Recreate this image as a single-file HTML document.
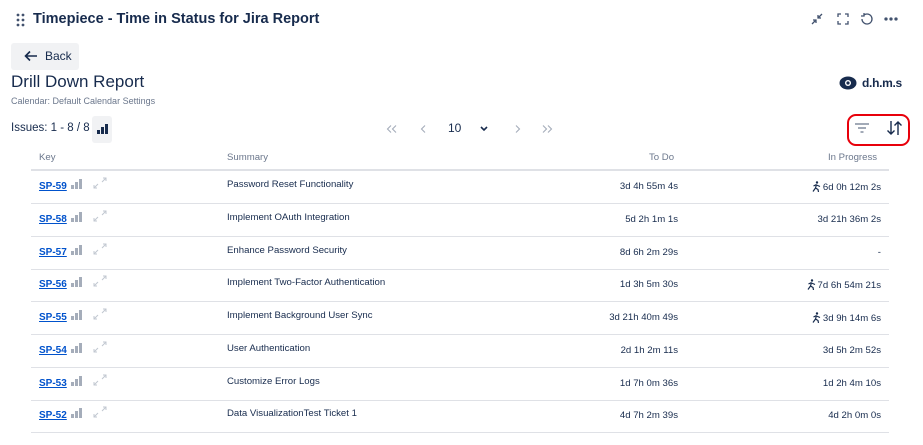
<!DOCTYPE html>
<html><head><style>
*{margin:0;padding:0;box-sizing:border-box}
body{width:923px;height:445px;background:#fff;font-family:"Liberation Sans",sans-serif;color:#172b4d;position:relative;overflow:hidden}
.a{position:absolute;white-space:nowrap}
.row{position:absolute;left:31px;width:858px;height:33px;border-bottom:1px solid #dfe1e6;font-size:9.6px}
.row .k{position:absolute;left:8px;top:10px;font-weight:bold;color:#0052cc;text-decoration:underline;font-size:10px}
.row .s{position:absolute;left:196px;top:8px}
.row .t{position:absolute;right:211px;top:10px}
.row .p{position:absolute;right:8px;top:10px}
.bars{position:absolute;left:40px;top:8px}
.exp{position:absolute;left:62px;top:6px}
.run{display:inline-block;vertical-align:-2px;margin-right:2px}
</style></head><body>
<svg class="a" style="left:16px;top:13px" width="10" height="14"><g fill="#42526e"><circle cx="2" cy="2" r="1.4"/><circle cx="7" cy="2" r="1.4"/><circle cx="2" cy="7" r="1.4"/><circle cx="7" cy="7" r="1.4"/><circle cx="2" cy="12" r="1.4"/><circle cx="7" cy="12" r="1.4"/></g></svg>
<div class="a" style="left:33px;top:11px;font-size:14.5px;font-weight:bold;color:#172b4d">Timepiece - Time in Status for Jira Report</div>
<svg class="a" style="left:810px;top:12px" width="100" height="16" fill="none" stroke="#42526e" stroke-width="1.3">
<path d="M2 12l4-4M3 8h3v3M12 2l-4 4M8 3v3h3"/>
<path d="M28 5V2h3M35 2h3v3M38 9v3h-3M31 12h-3V9"/>
<path d="M54 3a5 5 0 1 1-2 4M54 1v3h-3"/>
<circle cx="76" cy="7" r="1" fill="#42526e"/><circle cx="81" cy="7" r="1" fill="#42526e"/><circle cx="86" cy="7" r="1" fill="#42526e"/>
</svg>
<div class="a" style="left:11px;top:43px;width:68px;height:27px;background:#f1f2f4;border-radius:3px"></div>
<svg class="a" style="left:24px;top:50px" width="14" height="12" fill="none" stroke="#172b4d" stroke-width="1.6"><path d="M13 6H2M6 1.5L1.5 6 6 10.5"/></svg>
<div class="a" style="left:45px;top:49px;font-size:12px;color:#172b4d">Back</div>
<div class="a" style="left:11px;top:72px;font-size:17px;color:#172b4d">Drill Down Report</div>
<div class="a" style="left:11px;top:96px;font-size:9px;color:#6b778c">Calendar: Default Calendar Settings</div>
<svg class="a" style="left:839px;top:76px" width="18" height="14"><ellipse cx="9" cy="7" rx="8.5" ry="6.5" fill="#172b4d"/><circle cx="9" cy="7" r="3" fill="#fff"/><circle cx="9" cy="7" r="1.6" fill="#172b4d"/></svg>
<div class="a" style="left:862px;top:76px;font-size:12px;font-weight:bold;color:#172b4d;letter-spacing:-0.3px">d.h.m.s</div>
<div class="a" style="left:11px;top:122px;font-size:11.5px;color:#172b4d">Issues: 1 - 8 / 8</div>
<div class="a" style="left:92px;top:116px;width:20px;height:27px;background:#f1f2f4;border-radius:3px"></div>
<svg class="a" style="left:97px;top:124px" width="11" height="10" fill="#172b4d"><rect x="0" y="6" width="3" height="4"/><rect x="4" y="3" width="3" height="7"/><rect x="8" y="0" width="3" height="10"/></svg>
<svg class="a" style="left:386px;top:124px" width="170" height="10" fill="none" stroke="#a5adba" stroke-width="1.1">
<path d="M5 1.5L1.5 5 5 8.5M10 1.5L6.5 5 10 8.5"/>
<path d="M39 1.5L35.5 5 39 8.5"/>
<path d="M130 1.5L133.5 5 130 8.5"/>
<path d="M157 1.5L160.5 5 157 8.5M162 1.5L165.5 5 162 8.5"/>
</svg>
<div class="a" style="left:448px;top:121px;font-size:12px;color:#172b4d">10</div>
<svg class="a" style="left:480px;top:126px" width="8" height="6" fill="none" stroke="#172b4d" stroke-width="1.6"><path d="M1 1l3 3 3-3"/></svg>
<div class="a" style="left:847px;top:114px;width:63px;height:32px;border:2.5px solid #e8000b;border-radius:9px"></div>
<svg class="a" style="left:854px;top:122px" width="16" height="12" fill="none" stroke="#6b778c" stroke-width="1.3"><path d="M1 2h14M4 6h8M6.5 10h3"/></svg>
<svg class="a" style="left:886px;top:120px" width="18" height="16" fill="none" stroke="#172b4d" stroke-width="1.4"><path d="M5 1v13M1.5 10.5L5 14l3.5-3.5M12 15V2M8.5 5.5L12 2l3.5 3.5"/></svg>
<div class="a" style="left:39px;top:152px;font-size:9.6px;color:#6b778c">Key</div>
<div class="a" style="left:227px;top:152px;font-size:9.6px;color:#6b778c">Summary</div>
<div class="a" style="left:649px;top:152px;font-size:9.6px;color:#6b778c">To Do</div>
<div class="a" style="left:828px;top:152px;font-size:9.6px;color:#6b778c">In Progress</div>
<div class="a" style="left:31px;top:169px;width:858px;height:2px;background:#dfe1e6"></div>
<div class="row" style="top:171px"><span class="k">SP-59</span><svg class="bars" width="11" height="10" fill="#a5adba"><rect x="0" y="6" width="3" height="4"/><rect x="4" y="3" width="3" height="7"/><rect x="8" y="0" width="3" height="10"/></svg><svg class="exp" width="14" height="12" fill="none" stroke="#c1c7d0"><path d="M1 11l4-4M1 8v3h3M13 1L9 5M10 1h3v3"/></svg><span class="s">Password Reset Functionality</span><span class="t">3d 4h 55m 4s</span><span class="p"><svg class="run" width="9" height="11" fill="none" stroke="#172b4d" stroke-width="1.2"><circle cx="5" cy="1.5" r="1.2" fill="#172b4d" stroke="none"/><path d="M4.5 3.5L3.5 7 1 10.5M3.5 7L6 8.5 6.5 11M4.5 3.5L1.5 5M4.5 4L8 5.5"/></svg>6d 0h 12m 2s</span></div>
<div class="row" style="top:204px"><span class="k">SP-58</span><svg class="bars" width="11" height="10" fill="#a5adba"><rect x="0" y="6" width="3" height="4"/><rect x="4" y="3" width="3" height="7"/><rect x="8" y="0" width="3" height="10"/></svg><svg class="exp" width="14" height="12" fill="none" stroke="#c1c7d0"><path d="M1 11l4-4M1 8v3h3M13 1L9 5M10 1h3v3"/></svg><span class="s">Implement OAuth Integration</span><span class="t">5d 2h 1m 1s</span><span class="p">3d 21h 36m 2s</span></div>
<div class="row" style="top:237px"><span class="k">SP-57</span><svg class="bars" width="11" height="10" fill="#a5adba"><rect x="0" y="6" width="3" height="4"/><rect x="4" y="3" width="3" height="7"/><rect x="8" y="0" width="3" height="10"/></svg><svg class="exp" width="14" height="12" fill="none" stroke="#c1c7d0"><path d="M1 11l4-4M1 8v3h3M13 1L9 5M10 1h3v3"/></svg><span class="s">Enhance Password Security</span><span class="t">8d 6h 2m 29s</span><span class="p">-</span></div>
<div class="row" style="top:269px"><span class="k">SP-56</span><svg class="bars" width="11" height="10" fill="#a5adba"><rect x="0" y="6" width="3" height="4"/><rect x="4" y="3" width="3" height="7"/><rect x="8" y="0" width="3" height="10"/></svg><svg class="exp" width="14" height="12" fill="none" stroke="#c1c7d0"><path d="M1 11l4-4M1 8v3h3M13 1L9 5M10 1h3v3"/></svg><span class="s">Implement Two-Factor Authentication</span><span class="t">1d 3h 5m 30s</span><span class="p"><svg class="run" width="9" height="11" fill="none" stroke="#172b4d" stroke-width="1.2"><circle cx="5" cy="1.5" r="1.2" fill="#172b4d" stroke="none"/><path d="M4.5 3.5L3.5 7 1 10.5M3.5 7L6 8.5 6.5 11M4.5 3.5L1.5 5M4.5 4L8 5.5"/></svg>7d 6h 54m 21s</span></div>
<div class="row" style="top:302px"><span class="k">SP-55</span><svg class="bars" width="11" height="10" fill="#a5adba"><rect x="0" y="6" width="3" height="4"/><rect x="4" y="3" width="3" height="7"/><rect x="8" y="0" width="3" height="10"/></svg><svg class="exp" width="14" height="12" fill="none" stroke="#c1c7d0"><path d="M1 11l4-4M1 8v3h3M13 1L9 5M10 1h3v3"/></svg><span class="s">Implement Background User Sync</span><span class="t">3d 21h 40m 49s</span><span class="p"><svg class="run" width="9" height="11" fill="none" stroke="#172b4d" stroke-width="1.2"><circle cx="5" cy="1.5" r="1.2" fill="#172b4d" stroke="none"/><path d="M4.5 3.5L3.5 7 1 10.5M3.5 7L6 8.5 6.5 11M4.5 3.5L1.5 5M4.5 4L8 5.5"/></svg>3d 9h 14m 6s</span></div>
<div class="row" style="top:335px"><span class="k">SP-54</span><svg class="bars" width="11" height="10" fill="#a5adba"><rect x="0" y="6" width="3" height="4"/><rect x="4" y="3" width="3" height="7"/><rect x="8" y="0" width="3" height="10"/></svg><svg class="exp" width="14" height="12" fill="none" stroke="#c1c7d0"><path d="M1 11l4-4M1 8v3h3M13 1L9 5M10 1h3v3"/></svg><span class="s">User Authentication</span><span class="t">2d 1h 2m 11s</span><span class="p">3d 5h 2m 52s</span></div>
<div class="row" style="top:368px"><span class="k">SP-53</span><svg class="bars" width="11" height="10" fill="#a5adba"><rect x="0" y="6" width="3" height="4"/><rect x="4" y="3" width="3" height="7"/><rect x="8" y="0" width="3" height="10"/></svg><svg class="exp" width="14" height="12" fill="none" stroke="#c1c7d0"><path d="M1 11l4-4M1 8v3h3M13 1L9 5M10 1h3v3"/></svg><span class="s">Customize Error Logs</span><span class="t">1d 7h 0m 36s</span><span class="p">1d 2h 4m 10s</span></div>
<div class="row" style="top:400px"><span class="k">SP-52</span><svg class="bars" width="11" height="10" fill="#a5adba"><rect x="0" y="6" width="3" height="4"/><rect x="4" y="3" width="3" height="7"/><rect x="8" y="0" width="3" height="10"/></svg><svg class="exp" width="14" height="12" fill="none" stroke="#c1c7d0"><path d="M1 11l4-4M1 8v3h3M13 1L9 5M10 1h3v3"/></svg><span class="s">Data VisualizationTest Ticket 1</span><span class="t">4d 7h 2m 39s</span><span class="p">4d 2h 0m 0s</span></div>
</body></html>
